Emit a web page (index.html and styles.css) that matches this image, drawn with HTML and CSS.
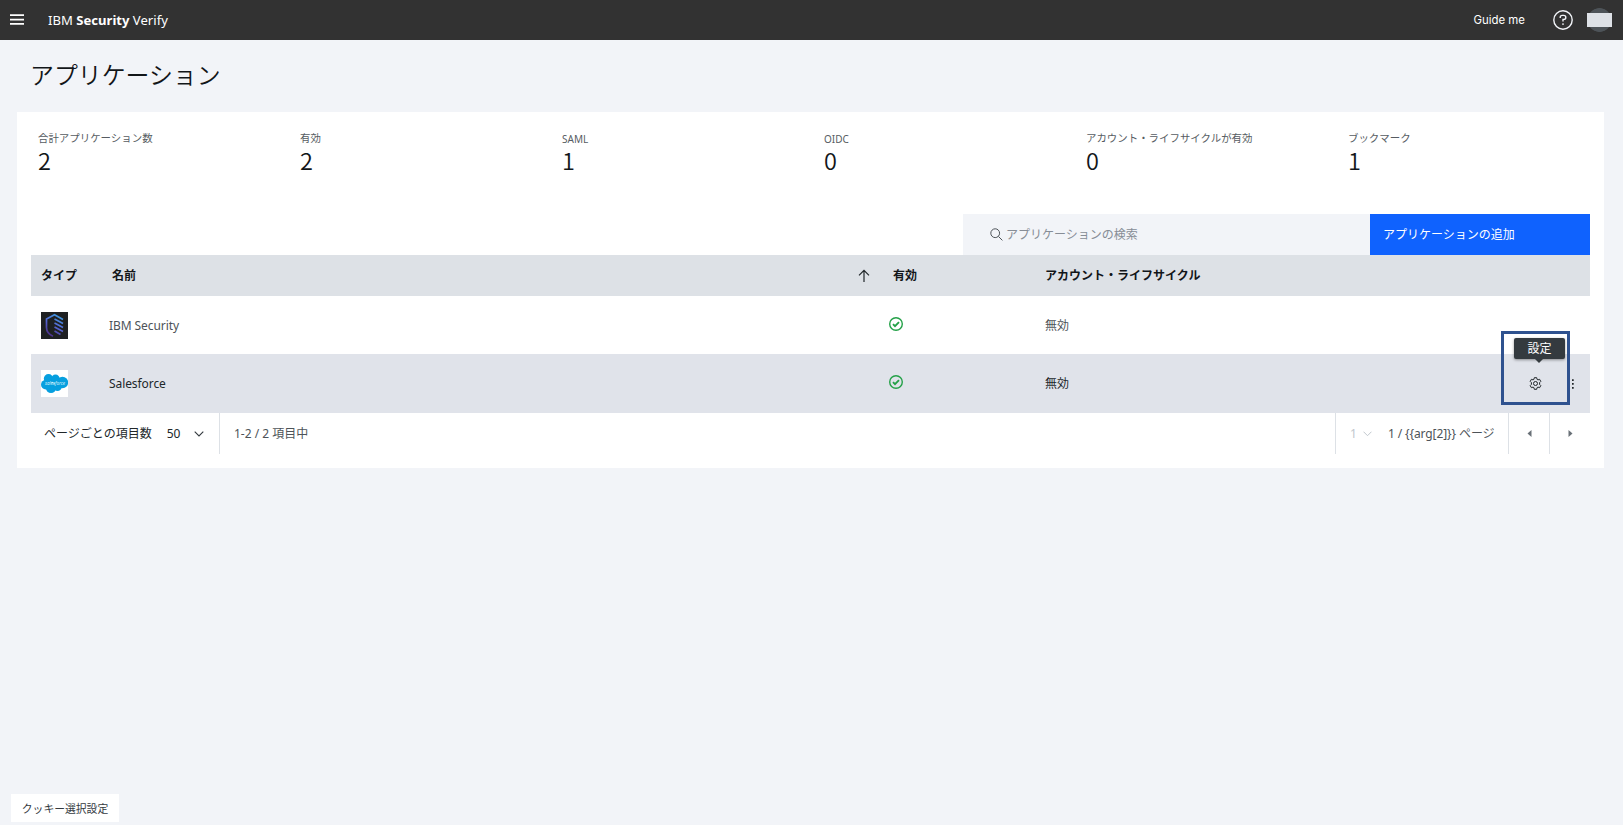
FILE: index.html
```html
<!DOCTYPE html>
<html lang="ja">
<head>
<meta charset="utf-8">
<title>アプリケーション</title>
<link rel="stylesheet" href="styles.css">
</head>
<body>
<header class="topbar">
  <svg class="menu" width="14" height="12" viewBox="0 0 14 12" fill="#fff"><path d="M0 .2h14v1.700H0zM0 4.700h14v1.700H0zM0 9.100h14v1.700H0z"/></svg>
  <div class="brand">IBM <b>Security</b> Verify</div>
  <div class="guide">Guide me</div>
  <svg class="help" width="20" height="20" viewBox="0 0 20 20" fill="none" stroke="#f2f4f8" stroke-width="1.4"><circle cx="10" cy="10" r="9.2"/><path d="M7.2 7.9V7.5q0-2.1 2.1-2.1h1.4q2.1 0 2.1 2t-2.1 2H10v2.2"/><circle cx="10" cy="14.1" r=".9" fill="#f2f4f8" stroke="none"/></svg>
  <div class="avatar"><span class="avatar-mask"></span></div>
</header>
<main class="page">
  <h1 class="title">アプリケーション</h1>
  <section class="card">
    <div class="stats">
      <div class="stat"><span class="stat-label">合計アプリケーション数</span><span class="stat-num">2</span></div>
      <div class="stat"><span class="stat-label">有効</span><span class="stat-num">2</span></div>
      <div class="stat"><span class="stat-label latin">SAML</span><span class="stat-num">1</span></div>
      <div class="stat"><span class="stat-label latin">OIDC</span><span class="stat-num">0</span></div>
      <div class="stat"><span class="stat-label">アカウント・ライフサイクルが有効</span><span class="stat-num">0</span></div>
      <div class="stat"><span class="stat-label">ブックマーク</span><span class="stat-num">1</span></div>
    </div>
    <div class="toolbar">
      <div class="search"><svg width="13" height="13" viewBox="0 0 13 13" fill="none" stroke="#4d5358"><circle cx="5.2" cy="5.2" r="4.4"/><path d="M8.4 8.4l4 4"/></svg><span>アプリケーションの検索</span></div>
      <div class="add">アプリケーションの追加</div>
    </div>
    <div class="row head">
      <div>タイプ</div>
      <div class="name-head"><span>名前</span><svg width="12" height="14" viewBox="0 0 12 14" fill="none" stroke="#21272a" stroke-width="1.2"><path d="M6 13V1.5M1 6.4l5-5 5 5"/></svg></div>
      <div class="enabled-head">有効</div>
      <div>アカウント・ライフサイクル</div>
    </div>
    <div class="row">
      <div><svg class="logo" width="27" height="27" viewBox="0 0 27 27"><defs><linearGradient id="g" gradientUnits="userSpaceOnUse" x1="20" y1="3" x2="8" y2="24"><stop offset="0" stop-color="#3b9de0"/><stop offset=".5" stop-color="#5668d6"/><stop offset="1" stop-color="#4a2a80"/></linearGradient></defs><path fill="#1e2022" d="M0 0h27v27H0z"/><path d="M22 7.500L13.500 2.800 5.500 7v8.500q0 6 6.500 8.800M13.500 7l8.500 4.500M13.500 11l8.500 4.500M13.500 15l8.500 4.500M13.500 19l6 3.500" fill="none" stroke="url(#g)" stroke-width="1.700"/></svg></div>
      <div class="name">IBM Security</div>
      <div class="ok"><svg width="14" height="14" viewBox="0 0 14 14" fill="none" stroke="#24a148"><circle cx="7" cy="7" r="6.300" stroke-width="1.400"/><path d="M4 7.200l2 2 4-4" stroke-width="1.900"/></svg></div>
      <div class="life">無効</div>
    </div>
    <div class="row active">
      <div><svg class="logo" width="27" height="27" viewBox="0 0 27 27"><path fill="#fff" d="M0 0h27v27H0z"/><g fill="#069fdf"><circle cx="7.500" cy="8.800" r="4.700"/><circle cx="14.500" cy="9" r="4.400"/><circle cx="21.500" cy="12.500" r="5.700"/><circle cx="4.800" cy="14.700" r="4.800"/><circle cx="10" cy="17.800" r="5.200"/><circle cx="16.500" cy="16.800" r="4.300"/></g><text class="sf-text" x="4" y="14.600" textLength="20">salesforce</text></svg></div>
      <div class="name">Salesforce</div>
      <div class="ok"><svg width="14" height="14" viewBox="0 0 14 14" fill="none" stroke="#24a148"><circle cx="7" cy="7" r="6.300" stroke-width="1.400"/><path d="M4 7.200l2 2 4-4" stroke-width="1.900"/></svg></div>
      <div>無効</div>
      <div class="actions">
        <svg width="13" height="13" viewBox="0 0 13 13" fill="none" stroke="#21272a"><path d="M5.300.7h2.400l.4 1.700.9.500 1.600-.6 1.200 2.100-1.200 1.200v1.800l1.200 1.200-1.200 2.100-1.600-.6-.9.500-.4 1.700H5.300l-.4-1.700-.9-.5-1.600.6-1.200-2.100 1.200-1.200V5.600L1.200 4.400l1.200-2.100 1.600.6.900-.5z" stroke-linejoin="round"/><circle cx="6.500" cy="6.500" r="2"/></svg>
        <svg width="2" height="10" viewBox="0 0 2 10" fill="#21272a"><path d="M0 .2h1.700v1.700H0zM0 4.100h1.700v1.700H0zM0 8h1.700v1.700H0z"/></svg>
      </div>
      <div class="marker"></div>
      <div class="tooltip">設定</div>
    </div>
    <div class="pager">
      <div class="size"><span class="size-label">ページごとの項目数</span><span class="fifty">50</span><svg width="10" height="6" viewBox="0 0 10 6" fill="none" stroke="#343a3f" stroke-width="1.100"><path d="M.7.700L5 5 9.300.7"/></svg></div>
      <div class="range">1-2 / 2 項目中</div>
      <div class="pages"><span class="current">1</span><svg width="9" height="6" viewBox="0 0 9 6" fill="none" stroke="#c1c7cd"><path d="M.5.700l4 4 4-4"/></svg><span class="total">1 / {{arg[2]}} ページ</span></div>
      <div class="step"><svg width="5" height="7" viewBox="0 0 5 7" fill="#697077"><path d="M4.500 0v7L.5 3.500z"/></svg></div>
      <div class="step next"><svg width="5" height="7" viewBox="0 0 5 7" fill="#697077"><path d="M.5 0v7l4-3.500z"/></svg></div>
    </div>
  </section>
</main>
<footer class="cookie">クッキー選択設定</footer>
</body>
</html>
```
FILE: styles.css
```css
* { box-sizing: border-box; }
body {
  margin: 0;
  height: 825px;
  display: flex;
  flex-direction: column;
  background: #f2f4f8;
  color: #121619;
  font: 12px/18px "Noto Sans", "Noto Sans CJK JP", sans-serif;
  white-space: nowrap;
  overflow: hidden;
}
svg { display: block; flex: none; }
.topbar {
  height: 40px;
  flex: none;
  display: flex;
  align-items: center;
  padding: 0 11px 0 10px;
  background: #323232;
  color: #fff;
}
.brand { margin-left: 24px; font: 13.100px/20px "Noto Sans", sans-serif; }
.brand b { font-weight: 700; }
.guide { margin-left: auto; font: 11.400px/20px Inter, sans-serif; }
.help { margin-left: 28px; }
.avatar {
  width: 25px;
  height: 24px;
  margin-left: 14px;
  display: flex;
  align-items: center;
  background: radial-gradient(circle, #4d5358 11.500px, transparent 12.200px);
}
.avatar-mask { width: 25px; height: 14px; background: #dde1e6; }
.page { flex: 1; padding: 0 19px 0 17px; }
.title {
  margin: 0;
  height: 72px;
  padding-left: 13px;
  font: 350 23.900px/68px "Noto Sans CJK JP", sans-serif;
}
.card { height: 356px; padding: 0 14px; background: #fff; }
.stats {
  height: 102px;
  padding: 18px 0 0 7px;
  display: grid;
  grid-template-columns: repeat(6, 262px);
}
.stat { display: flex; flex-direction: column; }
.stat-label { font: 10.450px/17px "Noto Sans", "Noto Sans CJK JP", sans-serif; color: #565c62; }
.stat-label.latin { font-size: 10px; line-height: 18px; margin-bottom: -1px; }
.stat-num { font: 350 23.500px/27px "Noto Sans CJK JP", sans-serif; }
.toolbar { height: 41px; display: flex; justify-content: flex-end; }
.search {
  width: 407px;
  padding-left: 27px;
  display: flex;
  align-items: center;
  gap: 3px;
  background: #f2f4f8;
  color: #878d96;
}
.add {
  width: 220px;
  padding-left: 13px;
  line-height: 41px;
  background: #0f62fe;
  color: #fff;
}
.row {
  position: relative;
  height: 58px;
  padding-left: 10px;
  display: grid;
  grid-template-columns: 68px 784px 152px 1fr;
  align-items: center;
  color: #4d5358;
}
.name { letter-spacing: -0.080px; }
.row .name, .row .life { padding-top: 1px; }
.head { height: 41px; background: #dde1e6; color: #121619; font-weight: 600; }
.name-head { display: flex; justify-content: space-between; align-items: center; padding: 0 23px 0 3px; }
.ok { margin: -3px 0 0 -4px; }
.active {
  height: 59px;
  grid-template-columns: 68px 784px 152px 1fr auto;
  background: #e0e3ea;
  color: #21272a;
}
.sf-text { font: italic 4.500px "Noto Sans", sans-serif; fill: #d4effb; }
.actions { display: flex; align-items: center; gap: 30px; padding-right: 16px; }
.marker {
  position: absolute;
  top: -23px;
  right: 20px;
  width: 69px;
  height: 74px;
  border: 3px solid #2f528f;
}
.tooltip {
  position: absolute;
  top: -16px;
  right: 25px;
  width: 51px;
  height: 21px;
  border-radius: 2px;
  background: #343a3f;
  color: #fff;
  line-height: 21px;
  text-align: center;
  box-shadow: 0 1px 3px #0006;
}
.tooltip::after {
  content: "";
  position: absolute;
  top: 21px;
  left: 21px;
  border: 4px solid transparent;
  border-top-color: #343a3f;
  border-bottom: 0;
}
.pager { height: 41px; display: flex; align-items: center; color: #4d5358; }
.pager > div { height: 41px; display: flex; align-items: center; }
.size { width: 189px; padding-left: 13px; border-right: 1px solid #dde1e6; color: #21272a; }
.fifty { margin: 0 14px 0 15px; }
.range { padding-left: 14px; }
.pages { margin-left: auto; width: 174px; padding-left: 14px; border-left: 1px solid #dde1e6; border-right: 1px solid #dde1e6; }
.current { margin-right: 6px; color: #c1c7cd; }
.total { margin-left: 16px; letter-spacing: -0.1px; }
.step { width: 40px; justify-content: center; }
.next { width: 41px; border-left: 1px solid #dde1e6; }
.cookie {
  width: 108px;
  height: 28px;
  flex: none;
  margin: 0 0 3px 11px;
  background: #fff;
  color: #343a3f;
  font-size: 10.800px;
  line-height: 29px;
  text-align: center;
}
```
